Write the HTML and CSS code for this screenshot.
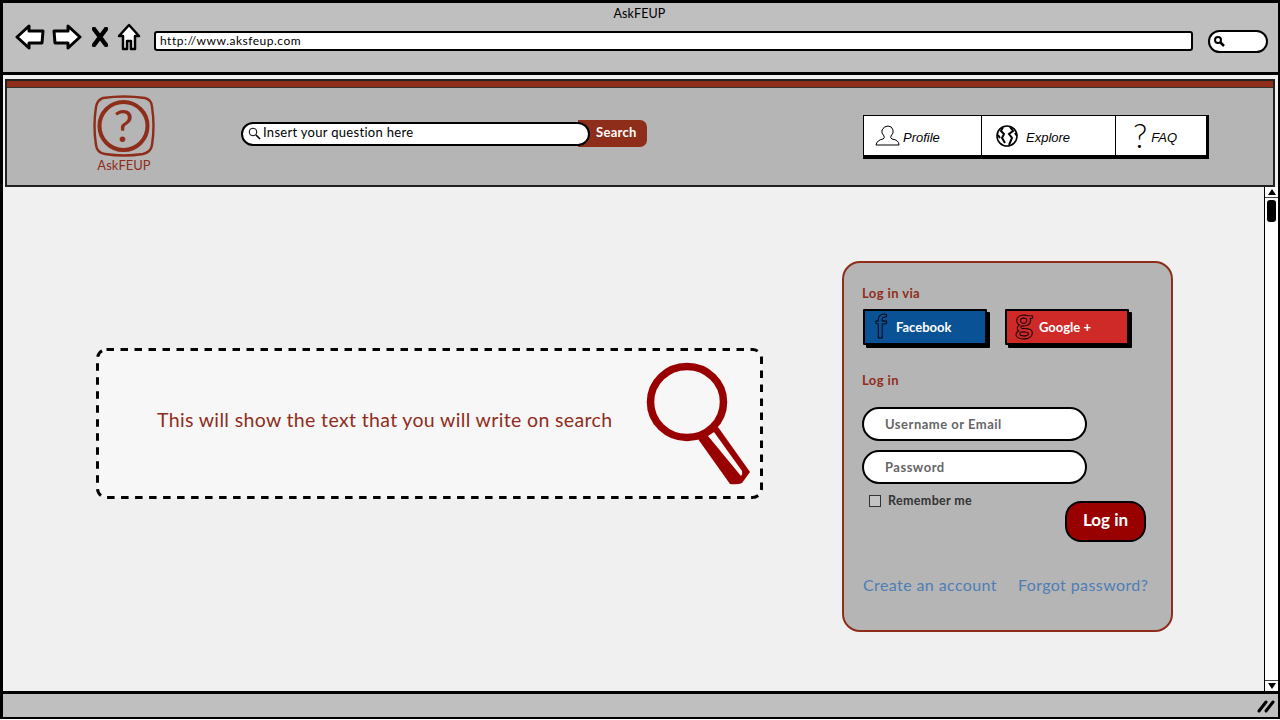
FILE: index.html
```html
<!DOCTYPE html>
<html>
    <head>
        <meta charset="UTF-8">
        <title>AskFEUP</title>
        <link rel="stylesheet" href="styles.css">
    </head>
    <body>
        <div class="window">
            <!-- browser toolbar -->
            <div class="toolbar">
                <div class="win-title">AskFEUP</div>
                <div class="tool-row">
                    <svg class="tool-icon" width="30" height="26" viewBox="0 0 30 26"><path d="M2 13 L14 2 L14 7 L28 7 L27 19 L14 19 L14 24 Z" fill="#fff" stroke="#000" stroke-width="3" stroke-linejoin="round"/></svg>
                    <svg class="tool-icon tool-fwd" width="30" height="26" viewBox="0 0 30 26"><path d="M28 13 L16 2 L16 7 L2 7 L3 19 L16 19 L16 24 Z" fill="#fff" stroke="#000" stroke-width="3" stroke-linejoin="round"/></svg>
                    <svg class="tool-icon tool-stop" width="16" height="20" viewBox="0 0 16 20"><path d="M2 2 L14 18 M14 2 L2 18" fill="none" stroke="#000" stroke-width="4.5" stroke-linecap="round"/></svg>
                    <svg class="tool-icon" width="24" height="28" viewBox="0 0 24 28"><path d="M12 2 L22 13 L18 13 L18 26 L14 26 L14 18 L10 18 L10 26 L6 26 L6 13 L2 13 Z" fill="#fff" stroke="#000" stroke-width="2.5" stroke-linejoin="round"/></svg>
                    <div class="address">http://www.aksfeup.com</div>
                    <div class="win-search">
                        <svg width="12" height="12" viewBox="0 0 12 12"><circle cx="5" cy="5" r="3" fill="none" stroke="#000" stroke-width="2"/><path d="M7.5 7.5 L11 11" stroke="#000" stroke-width="2.5"/></svg>
                    </div>
                </div>
            </div>

            <div class="site">
                <!-- site header -->
                <div class="site-header">
                    <div class="header-strip"></div>
                    <div class="header-body">
                        <div class="logo">
                            <svg width="62" height="62" viewBox="0 0 62 62">
                                <path d="M10 3 Q31 0 52 3 Q59 5 59 12 Q62 31 59 50 Q58 57 50 59 Q31 62 12 59 Q4 58 3 50 Q0 31 3 12 Q4 5 10 3 Z" fill="none" stroke="#8f2d1b" stroke-width="2.4"/>
                                <circle cx="30.5" cy="31" r="24" fill="none" stroke="#8f2d1b" stroke-width="4"/>
                                <text x="30.5" y="47" class="logo-mark">?</text>
                            </svg>
                            <div class="logo-name">AskFEUP</div>
                        </div>
                        <div class="search">
                            <div class="search-input">
                                <svg width="13" height="13" viewBox="0 0 13 13"><circle cx="5" cy="5" r="3.8" fill="none" stroke="#000"/><path d="M8 8 L12 12" stroke="#000" stroke-width="1.6"/></svg>
                                <span class="search-text">Insert your question here</span>
                            </div>
                            <div class="search-btn">Search</div>
                        </div>
                        <div class="nav">
                            <div class="nav-item nav-profile">
                                <svg width="26" height="22" viewBox="0 0 26 22"><path d="M1 20 Q2 15 8 14 Q10 13 9 11 Q6 8 7 5 Q9 1 13 1 Q17 1 18 5 Q19 8 16 11 Q15 13 17 14 Q24 15 24 20 Z" fill="none" stroke="#000"/></svg>
                                <span class="nav-text">Profile</span>
                            </div>
                            <div class="nav-item nav-explore">
                                <svg width="24" height="24" viewBox="0 0 24 24"><circle cx="12" cy="12" r="10" fill="none" stroke="#000" stroke-width="1.6"/><path d="M8 3 L6 7 L9 10 L7 14 L10 19 M15 3 L18 7 L14 10 L17 14 L14 21 M3 11 L5 14 M20 9 L22 12" fill="none" stroke="#000" stroke-width="2"/></svg>
                                <span class="nav-text">Explore</span>
                            </div>
                            <div class="nav-item nav-faq">
                                <i class="faq-mark">?</i>
                                <span class="nav-text">FAQ</span>
                            </div>
                        </div>
                    </div>
                </div>

                <div class="below">
                    <div class="page">
                        <!-- search result placeholder -->
                        <div class="placeholder">
                            <svg class="dashes" width="667" height="151" viewBox="0 0 667 151"><rect x="1.5" y="1.5" width="664" height="148" rx="9" fill="#f7f7f7" stroke="#000" stroke-width="3" stroke-dasharray="7.5 6.5"/></svg>
                            <p class="placeholder-text">This will show the text that you will write on search</p>
                            <svg class="magnifier" width="112" height="126" viewBox="0 0 112 126">
                                <ellipse cx="47" cy="42" rx="36.5" ry="35.5" fill="none" stroke="#990000" stroke-width="7.5"/>
                                <path d="M58 79 L90 124 Q98 125 102 123 L110 112 L78 67 Z" fill="#990000"/>
                                <path d="M68 76 L74 72 L102 111 Q103 114 101 116 Z" fill="#f7f7f7"/>
                            </svg>
                        </div>

                        <!-- login box -->
                        <div class="login">
                            <div class="login-label">Log in via</div>
                            <div class="social">
                                <div class="social-btn facebook">
                                    <svg width="20" height="28" viewBox="0 0 20 28"><text x="8" y="25" class="social-mark mark-f">f</text></svg>
                                    <span>Facebook</span>
                                </div>
                                <div class="social-btn google">
                                    <svg width="20" height="28" viewBox="0 0 20 28"><text x="9" y="20" class="social-mark mark-g">g</text></svg>
                                    <span>Google +</span>
                                </div>
                            </div>
                            <div class="login-label second">Log in</div>
                            <div class="field">Username or Email</div>
                            <div class="field">Password</div>
                            <div class="login-row">
                                <label class="remember"><span class="check"></span>Remember me</label>
                                <div class="login-btn">Log in</div>
                            </div>
                            <div class="links">
                                <span>Create an account</span>
                                <span>Forgot password?</span>
                            </div>
                        </div>
                    </div>
                    <div class="scrollbar">
                        <div class="scroll-btn scroll-top"><div class="arrow-up"></div></div>
                        <div class="thumb"></div>
                        <div class="scroll-btn scroll-bottom"><div class="arrow-down"></div></div>
                    </div>
                </div>
            </div>

            <div class="statusbar">
                <svg width="18" height="14" viewBox="0 0 18 14"><path d="M2 12 L9 3 M9 12 L16 3" fill="none" stroke="#000" stroke-width="3" stroke-linecap="round"/></svg>
            </div>
        </div>
    </body>
</html>
```

FILE: styles.css
```css
*{
    margin: 0;
    padding: 0;
    box-sizing: border-box;
}
body{
    width: 1280px;
    height: 720px;
    overflow: hidden;
    background-color: #fff;
    font-family: "Lato", "Liberation Sans", sans-serif;
}
.window{
    width: 1280px;
    height: 719px;
    border: 3px solid #000;
    border-bottom-width: 2px;
    border-right-width: 2px;
    display: flex;
    flex-direction: column;
    background-color: #f0f0f0;
}

/* toolbar */
.toolbar{
    height: 72px;
    flex: none;
    background-color: #bfbfbf;
    border-bottom: 3px solid #000;
}
.win-title{
    text-align: center;
    font-size: 12.5px;
    line-height: 14px;
    padding-top: 4px;
    padding-right: 2px;
    letter-spacing: 0.1px;
    color: #000;
}
.tool-row{
    display: flex;
    align-items: center;
    height: 32px;
    margin-top: 0;
    padding-left: 12px;
}
.tool-icon{
    flex: none;
    margin-right: 7px;
}
.tool-fwd{
    margin-right: 10px;
}
.tool-stop{
    margin-right: 9px;
}
.address{
    width: 1039px;
    height: 20px;
    margin: 8px 0 0 6px;
    border: 2.5px solid #000;
    border-radius: 3px;
    background-color: #fff;
    font-size: 12px;
    line-height: 15px;
    padding-left: 4px;
    letter-spacing: 0.5px;
}
.win-search{
    width: 60px;
    height: 23px;
    margin: 8px 0 0 15px;
    border: 2.5px solid #000;
    border-radius: 12px;
    background-color: #fff;
    padding: 3px 0 0 3px;
}
.win-search svg{
    display: block;
}

/* site */
.site{
    flex: 1;
    min-height: 0;
    display: flex;
    flex-direction: column;
    padding-top: 4px;
}
.site-header{
    height: 108px;
    flex: none;
    margin: 0 3px 0 2px;
    border: 2px solid #222;
    background-color: #b5b5b5;
}
.header-strip{
    height: 7px;
    background-color: #8f2d1b;
    border-bottom: 1px solid #333;
}
.header-body{
    display: flex;
    align-items: flex-start;
    padding-left: 86px;
}
.logo{
    width: 62px;
    display: flex;
    flex-direction: column;
    align-items: center;
    padding-top: 7px;
}
.logo svg{
    display: block;
}
.logo-mark{
    font-family: "Lato", sans-serif;
    font-size: 45px;
    fill: #8f2d1b;
    text-anchor: middle;
}
.logo-name{
    font-size: 13px;
    line-height: 15px;
    color: #8f2d1b;
    margin-top: 1px;
    white-space: nowrap;
}
.search{
    display: flex;
    align-items: center;
    margin: 32px 0 0 86px;
}
.search-input{
    width: 349px;
    height: 24px;
    border: 2.5px solid #000;
    border-radius: 12px;
    background-color: #fff;
    display: flex;
    align-items: center;
    gap: 2px;
    padding-left: 5px;
    font-size: 13px;
    letter-spacing: 0.3px;
    position: relative;
    z-index: 1;
}
.search-text{
    padding-bottom: 3px;
}
.search-btn{
    width: 69px;
    height: 27px;
    margin-left: -12px;
    padding-left: 18px;
    border-radius: 0 7px 7px 0;
    background-color: #8f2d1b;
    color: #fff;
    font-size: 13px;
    font-weight: 700;
    line-height: 25px;
    letter-spacing: 0.3px;
}
.nav{
    display: flex;
    height: 44px;
    margin: 27px 0 0 216px;
    background-color: #fff;
    border: 2px solid #000;
    border-top-width: 1.5px;
    border-left-width: 1.5px;
    border-bottom-width: 4px;
    border-right-width: 3px;
}
.nav-item{
    display: flex;
    align-items: center;
    font-family: "Liberation Sans", sans-serif;
    font-style: italic;
    font-size: 13px;
    color: #000;
}
.nav-text{
    padding-top: 4px;
}
.nav-profile{
    width: 118px;
    padding-left: 11px;
    gap: 2px;
    border-right: 1.5px solid #000;
}
.nav-explore{
    width: 134px;
    padding-left: 13px;
    gap: 7px;
    border-right: 1.5px solid #000;
}
.nav-faq{
    width: 90px;
    padding-left: 17px;
    gap: 4px;
}
.faq-mark{
    font-family: "Lato", sans-serif;
    font-style: normal;
    font-size: 33px;
    font-weight: 300;
    line-height: 34px;
    margin-top: -2px;
}

/* main area */
.below{
    flex: 1;
    min-height: 0;
    display: flex;
}
.page{
    flex: 1;
    display: flex;
    align-items: flex-start;
    padding-left: 93px;
}
.placeholder{
    width: 667px;
    height: 151px;
    margin-top: 161px;
    display: flex;
    align-items: center;
    padding: 0 0 8px 61px;
    position: relative;
}
.dashes{
    position: absolute;
    left: 0;
    top: 0;
}
.placeholder-text{
    font-size: 19.5px;
    letter-spacing: 0.35px;
    color: #8f2d1b;
    white-space: nowrap;
    position: relative;
}
.magnifier{
    position: absolute;
    left: 544px;
    top: 12px;
}
.login{
    width: 331px;
    height: 371px;
    margin: 74px 0 0 79px;
    border: 2px solid #8f2d1b;
    border-radius: 18px;
    background-color: #b5b5b5;
    padding: 22px 0 0 18px;
}
.login-label{
    font-size: 13px;
    font-weight: 700;
    line-height: 16px;
    color: #8f2d1b;
    letter-spacing: 0.4px;
}
.second{
    margin: 27px 0 19px;
}
.social{
    display: flex;
    gap: 18px;
    margin: 8px 0 0 1px;
}
.social-btn{
    width: 124px;
    height: 36px;
    border: 2px solid #000;
    border-radius: 1px;
    box-shadow: 3px 3px 0 #000;
    display: flex;
    align-items: center;
    color: #fff;
    font-size: 13px;
    font-weight: 700;
    padding-left: 8px;
    gap: 3px;
}
.social-btn svg{
    overflow: visible;
}
.facebook{
    background-color: #0a5296;
}
.google{
    background-color: #cf2a27;
    gap: 4px;
}
.social-mark{
    font-family: "Lato", sans-serif;
    fill: none;
    stroke: #000;
    stroke-width: 0.9;
    text-anchor: middle;
}
.mark-f{
    font-size: 32px;
}
.mark-g{
    font-size: 34px;
}
.field{
    width: 225px;
    height: 34px;
    margin-top: 9px;
    border: 2px solid #000;
    border-radius: 17px;
    background-color: #fff;
    padding-left: 21px;
    font-size: 13px;
    font-weight: 700;
    line-height: 30px;
    color: #666;
    letter-spacing: 0.5px;
}
.login-row{
    display: flex;
    align-items: flex-start;
    justify-content: space-between;
    width: 284px;
}
.remember{
    display: flex;
    align-items: center;
    gap: 7px;
    margin: 9px 0 0 7px;
    font-size: 12.5px;
    font-weight: 700;
    color: #333;
    letter-spacing: 0.35px;
}
.check{
    width: 12px;
    height: 12px;
    border: 1.5px solid #333;
    background-color: #c4c4c4;
}
.login-btn{
    width: 81px;
    height: 41px;
    margin-top: 17px;
    border: 2.5px solid #000;
    border-radius: 16px;
    background-color: #990000;
    color: #fff;
    font-size: 17px;
    font-weight: 700;
    line-height: 33px;
    text-align: center;
}
.links{
    display: flex;
    gap: 21px;
    margin: 33px 0 0 1px;
    font-size: 16px;
    color: #4f7db5;
    letter-spacing: 0.4px;
    white-space: nowrap;
}

/* scrollbar */
.scrollbar{
    width: 14px;
    flex: none;
    background-color: #fff;
    border-left: 1.5px solid #000;
    display: flex;
    flex-direction: column;
    align-items: center;
}
.scroll-btn{
    width: 100%;
    height: 11px;
    flex: none;
    display: flex;
    align-items: center;
    justify-content: center;
}
.scroll-top{
    border-bottom: 1px solid #444;
}
.scroll-bottom{
    margin-top: auto;
    border-top: 1px solid #444;
}
.arrow-up,
.arrow-down{
    width: 0;
    height: 0;
    border-left: 4px solid transparent;
    border-right: 4px solid transparent;
}
.arrow-up{
    border-bottom: 6px solid #000;
}
.arrow-down{
    border-top: 6px solid #000;
}
.thumb{
    width: 9px;
    height: 22px;
    margin-top: 2px;
    border-radius: 3px;
    background-color: #000;
}
.statusbar{
    height: 26px;
    flex: none;
    background-color: #bfbfbf;
    border-top: 3px solid #000;
    display: flex;
    align-items: center;
    justify-content: flex-end;
    padding-right: 3px;
}
```
